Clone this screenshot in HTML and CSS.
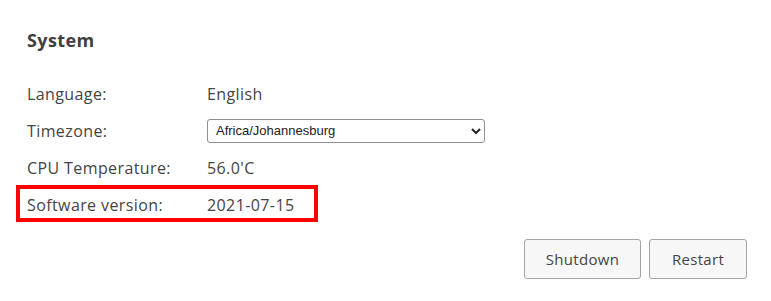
FILE: index.html
```html
<!DOCTYPE html>
<html>
<head>
<meta charset="utf-8">
<link rel="stylesheet" href="styles.css">
</head>
<body>
<div class="panel">
  <h2 class="title">System</h2>
  <div class="rows">
    <div class="row"><span class="label">Language:</span><span class="value">English</span></div>
    <div class="row"><span class="label">Timezone:</span>
      <select class="tz"><option>Africa/Johannesburg</option></select>
    </div>
    <div class="row"><span class="label">CPU Temperature:</span><span class="value">56.0'C</span></div>
    <div class="row highlight"><span class="label">Software version:</span><span class="value">2021-07-15</span></div>
  </div>
  <div class="actions">
    <button class="btn btn-shutdown">Shutdown</button>
    <button class="btn btn-restart">Restart</button>
  </div>
</div>
</body>
</html>
```
FILE: styles.css
```css
html, body {
  margin: 0;
  padding: 0;
  background: #ffffff;
}
body {
  font-family: "Open Sans", "Noto Sans", sans-serif;
  color: #444444;
}
.panel {
  width: 771px;
  height: 301px;
  box-sizing: border-box;
  padding: 26px 24px 0 27px;
}
.title {
  margin: 0;
  font-size: 18px;
  font-weight: 700;
  line-height: 28px;
  letter-spacing: 0.4px;
  color: #3f3f3f;
}
.rows {
  margin-top: 21px;
  display: flex;
  flex-direction: column;
}
.row {
  position: relative;
  display: flex;
  align-items: center;
  height: 37px;
  font-size: 16px;
  letter-spacing: 0.4px;
  width: fit-content;
}
.label {
  width: 180px;
  flex: none;
}
.tz {
  width: 278px;
  height: 24px;
  font-family: "Liberation Sans", Arial, sans-serif;
  font-size: 13px;
  letter-spacing: 0;
  color: #222;
  border: 1px solid #8f8f8f;
  border-radius: 3px;
  background: #fff;
  padding: 0 4px;
}
.highlight::after {
  content: "";
  position: absolute;
  left: -11px;
  right: -24px;
  top: -1px;
  bottom: 1px;
  border: 4px solid #ff0000;
}
.actions {
  display: flex;
  justify-content: flex-end;
  gap: 8px;
  margin-top: 16px;
}
.btn {
  height: 40px;
  font-family: "Open Sans", "Noto Sans", sans-serif;
  font-size: 15px;
  letter-spacing: 0.3px;
  color: #444;
  background: #f7f7f7;
  border: 1px solid #a3a3a3;
  border-radius: 3px;
  padding: 0;
}
.btn-shutdown { width: 117px; }
.btn-restart { width: 98px; }
```
